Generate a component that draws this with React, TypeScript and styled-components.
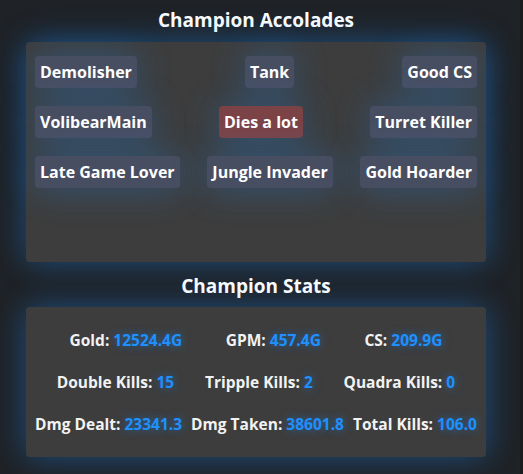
import React from "react";
import styled, { createGlobalStyle } from "styled-components";

const Global = createGlobalStyle`
  html, body { margin: 0; padding: 0; background: #1a1b1d; }
  body { font-family: "Open Sans", "Noto Sans", sans-serif; }
`;

const Page = styled.div`
  width: 520px;
  min-height: 474px;
  background: #1f2226;
  overflow: hidden;
`;

const Section = styled.section`
  width: 460px;
  margin-left: 26px;
  display: flex;
  flex-direction: column;
`;

const Title = styled.h2<{ $top: number; $bottom: number }>`
  margin: ${(p) => p.$top}px 0 ${(p) => p.$bottom}px;
  font-size: 19px;
  line-height: 24px;
  font-weight: 700;
  color: #ffffff;
  text-align: center;
`;

const Panel = styled.div<{ $height: number; $pad: string }>`
  height: ${(p) => p.$height}px;
  box-sizing: border-box;
  padding: ${(p) => p.$pad};
  background: #3d3d3d;
  border-radius: 4px;
  box-shadow: 0 0 32px rgba(30, 144, 255, 0.42);
  display: flex;
  flex-direction: column;
`;

const TagRow = styled.div`
  display: flex;
  justify-content: space-between;
  align-items: center;
  & + & { margin-top: 18px; }
`;

const Tag = styled.span<{ $bad?: boolean }>`
  height: 32px;
  box-sizing: border-box;
  padding: 0 5px;
  display: inline-flex;
  align-items: center;
  border-radius: 4px;
  background: ${(p) => (p.$bad ? "#7b4346" : "#484e61")};
  color: #ffffff;
  font-size: 16px;
  font-weight: 700;
  white-space: nowrap;
  box-shadow: 0 0 36px rgba(30, 144, 255, 0.32);
`;

const StatRow = styled.div`
  height: 42px;
  display: flex;
  justify-content: space-evenly;
  align-items: center;
  gap: 9px;
  &:first-child { margin-top: 1px; }
`;

const Stat = styled.span`
  font-size: 15.5px;
  font-weight: 700;
  color: #f2f2f2;
  white-space: nowrap;
`;

const Value = styled.span`
  color: #1e90ff;
  text-shadow: 0 0 8px rgba(30, 144, 255, 0.55);
`;

const tagRows: { label: string; bad?: boolean }[][] = [
  [{ label: "Demolisher" }, { label: "Tank" }, { label: "Good CS" }],
  [{ label: "VolibearMain" }, { label: "Dies a lot", bad: true }, { label: "Turret Killer" }],
  [{ label: "Late Game Lover" }, { label: "Jungle Invader" }, { label: "Gold Hoarder" }],
];

const statRows: [string, string][][] = [
  [["Gold", "12524.4G"], ["GPM", "457.4G"], ["CS", "209.9G"]],
  [["Double Kills", "15"], ["Tripple Kills", "2"], ["Quadra Kills", "0"]],
  [["Dmg Dealt", "23341.3"], ["Dmg Taken", "38601.8"], ["Total Kills", "106.0"]],
];

export default function App() {
  return (
    <Page>
      <Global />
      <Section>
        <Title $top={8} $bottom={10}>Champion Accolades</Title>
        <Panel $height={220} $pad="14px 9px">
          {tagRows.map((row, i) => (
            <TagRow key={i}>
              {row.map((t) => (
                <Tag key={t.label} $bad={t.bad}>{t.label}</Tag>
              ))}
            </TagRow>
          ))}
        </Panel>
        <Title $top={12} $bottom={9}>Champion Stats</Title>
        <Panel $height={150} $pad="11px 9px">
          {statRows.map((row, i) => (
            <StatRow key={i}>
              {row.map(([k, v]) => (
                <Stat key={k}>
                  {k}: <Value>{v}</Value>
                </Stat>
              ))}
            </StatRow>
          ))}
        </Panel>
      </Section>
    </Page>
  );
}
